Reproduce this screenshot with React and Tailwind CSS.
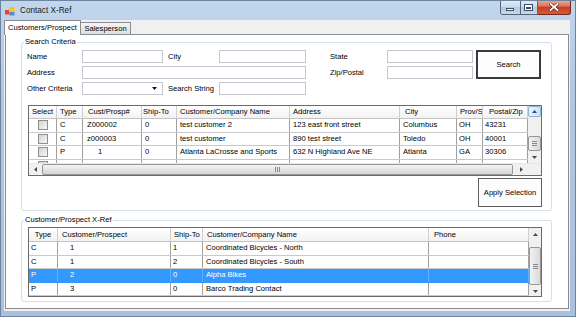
import React from 'react';

function Tri({ dir, color = '#4a4a4a' }) {
  if (dir === 'up')
    return (
      <svg width="5" height="3" viewBox="0 0 5 3"><polygon points="0,3 2.5,0 5,3" fill={color} /></svg>
    );
  if (dir === 'down')
    return (
      <svg width="5" height="3" viewBox="0 0 5 3"><polygon points="0,0 2.5,3 5,0" fill={color} /></svg>
    );
  if (dir === 'left')
    return (
      <svg width="3" height="5" viewBox="0 0 3 5"><polygon points="3,0 0,2.5 3,5" fill={color} /></svg>
    );
  return (
    <svg width="3" height="5" viewBox="0 0 3 5"><polygon points="0,0 3,2.5 0,5" fill={color} /></svg>
  );
}

function VGrip() {
  return (
    <div className="flex flex-col gap-[1px]">
      <div className="w-[5px] h-px bg-[#8a8a8a]" />
      <div className="w-[5px] h-px bg-[#8a8a8a]" />
      <div className="w-[5px] h-px bg-[#8a8a8a]" />
    </div>
  );
}

function HGrip() {
  return (
    <div className="flex gap-[1px]">
      <div className="w-px h-[5px] bg-[#8a8a8a]" />
      <div className="w-px h-[5px] bg-[#8a8a8a]" />
      <div className="w-px h-[5px] bg-[#8a8a8a]" />
    </div>
  );
}

function Checkbox() {
  return (
    <div className="w-[10px] h-[10px] border border-[#8e8f8f] bg-linear-to-br from-[#d2d2d2] to-[#f8f8f8]" />
  );
}

const UC = [
  { w: 'w-[28px]', hp: 'justify-center', dp: 'justify-center' },
  { w: 'w-[26px]', hp: 'pl-[3px]', dp: 'pl-[3px]' },
  { w: 'w-[59px]', hp: 'pl-[5px]', dp: 'pl-[4px]' },
  { w: 'w-[35px]', hp: 'pl-[1px]', dp: 'pl-[3px]' },
  { w: 'w-[113px]', hp: 'pl-[3px]', dp: 'pl-[3px]' },
  { w: 'w-[110px]', hp: 'pl-[3px]', dp: 'pl-[3px]' },
  { w: 'w-[57px]', hp: 'pl-[5px]', dp: 'pl-[3px]' },
  { w: 'w-[26px]', hp: 'pl-[3px]', dp: 'pl-[2px]' },
  { w: 'w-[45px]', hp: 'pl-[6px]', dp: 'pl-[2px]' },
];
const UH = ['Select', 'Type', 'Cust/Prosp#', 'Ship-To', 'Customer/Company Name', 'Address', 'City', 'Prov/S', 'Postal/Zip'];
const UR = [
  ['', 'C', 'Z000002', '0', 'test customer 2', '123 east front street', 'Columbus', 'OH', '43231'],
  ['', 'C', 'z000003', '0', 'test customer', '890 test street', 'Toledo', 'OH', '40001'],
  ['', 'P', { t: '1', cls: 'pl-[15px]' }, '0', 'Atlanta LaCrosse and Sports', '632 N Highland Ave NE', 'Atlanta', 'GA', '30306'],
  ['', '', '', '', '', '', '', '', ''],
];

const LC = [
  { w: 'w-[29px]', hp: 'justify-center', dp: 'pl-[2px]' },
  { w: 'w-[113px]', hp: 'pl-[4px]', dp: 'pl-[12px]' },
  { w: 'w-[32px]', hp: 'pl-[3px]', dp: 'pl-[2px]' },
  { w: 'w-[226px]', hp: 'pl-[4px]', dp: 'pl-[3px]' },
  { w: 'w-[100px]', hp: 'pl-[5px]', dp: 'pl-[3px]' },
];
const LH = ['Type', 'Customer/Prospect', 'Ship-To', 'Customer/Company Name', 'Phone'];
const LR = [
  ['C', '1', '1', 'Coordinated Bicycles - North', ''],
  ['C', '1', '2', 'Coordinated Bicycles - South', ''],
  ['P', '2', '0', 'Alpha Bikes', ''],
  ['P', '3', '0', 'Barco Trading Contact', ''],
];

function HeaderRow({ cols, labels, h }) {
  return (
    <div className={`flex shrink-0 ${h} border-b border-[#c4c4c4] bg-linear-to-b from-white to-[#f2f2f2]`}>
      {cols.map((c, i) => (
        <div key={i} className={`${c.w} ${c.hp} shrink-0 flex items-center overflow-hidden whitespace-nowrap border-r border-[#d0d0d0]`}>
          {labels[i]}
        </div>
      ))}
    </div>
  );
}

function Input({ className = '' }) {
  return <div className={`h-[13px] border border-[#c4c7cd] bg-white ${className}`} />;
}

function Label({ children, className = '' }) {
  return <div className={`whitespace-nowrap ${className}`}>{children}</div>;
}

export default function App() {
  return (
    <div className="w-[576px] h-[317px] overflow-hidden flex flex-col border border-[#6d84a0] bg-[linear-gradient(180deg,#c2d6ec_0%,#b1c8e2_30%,#a9c1dd_100%)] font-['Liberation_Sans',Arial,sans-serif] text-[7.6px] leading-none text-black">
      {/* Title bar */}
      <div className="h-[19px] shrink-0 flex items-start">
        <div className="flex items-center h-full pl-[4px] gap-[5px] pt-[1px]">
          <svg width="10" height="10" viewBox="0 0 10 10">
            <rect x="0" y="4" width="4.5" height="4.5" fill="#e2462d" />
            <rect x="4" y="1" width="5.5" height="5" fill="#f5c42c" />
            <rect x="4.5" y="6" width="5" height="3.5" fill="#5a8ad0" />
          </svg>
          <span className="text-[8.2px] text-[#1a1a1a]">Contact X-Ref</span>
        </div>
        <div className="ml-auto mr-[4px] -mt-px flex h-[15px]">
          <div className="w-[38px] flex border border-t-0 border-[#52687f] rounded-bl-[3px] overflow-hidden">
            <div className="w-[21px] flex items-end justify-center pb-[3px] border-r border-[#52687f] bg-[linear-gradient(180deg,#e3ecf6_0%,#cbdaeb_50%,#b5c9df_51%,#c8d8ea_100%)]">
              <div className="w-[8px] h-[3px] bg-white border border-[#3b4d64]" />
            </div>
            <div className="w-[17px] flex items-center justify-center bg-[linear-gradient(180deg,#e3ecf6_0%,#cbdaeb_50%,#b5c9df_51%,#c8d8ea_100%)]">
              <div className="w-[9px] h-[7px] border border-[#3b4d64] bg-white p-[1px] pt-[2px]">
                <div className="w-full h-full bg-[#b9cbe0] border border-[#3b4d64]" />
              </div>
            </div>
          </div>
          <div className="w-[33px] flex items-center justify-center border border-t-0 border-l-0 border-[#6e2b1f] rounded-br-[3px] bg-[linear-gradient(180deg,#eab09f_0%,#d9735a_45%,#c63c20_50%,#d65a3d_100%)]">
            <svg width="10" height="8" viewBox="0 0 10 8">
              <path d="M1.5 1 L8.5 7 M8.5 1 L1.5 7" stroke="#5a1a10" strokeWidth="3" strokeLinecap="square" />
              <path d="M1.5 1 L8.5 7 M8.5 1 L1.5 7" stroke="#ffffff" strokeWidth="1.8" strokeLinecap="square" />
            </svg>
          </div>
        </div>
      </div>

      {/* Body */}
      <div className="flex-1 flex pl-[3px] pr-[5px] pb-[5px] min-h-0">
        <div className="flex-1 flex flex-col bg-[#f0f0f0] min-h-0">
          {/* Tabs */}
          <div className="h-[14px] shrink-0 flex items-end">
            <div className="relative z-10 w-[77px] h-[15px] -mb-px flex items-center justify-center bg-white border border-b-0 border-[#898c95] pb-[1px]">
              Customers/Prospect
            </div>
            <div className="w-[50px] h-[12px] flex items-center justify-center border border-l-0 border-b-0 border-[#898c95] bg-linear-to-b from-[#f5f5f5] to-[#dedede]">
              Salesperson
            </div>
          </div>

          {/* Tab page */}
          <div className="flex-1 mx-[1px] mb-[2px] border border-[#898c95] bg-white min-h-0">
            {/* Search Criteria */}
            <fieldset className="ml-[15px] mt-[1px] w-[531px] border border-[#d5dfe5] rounded-[3px] pb-[3px]">
              <legend className="ml-[2px] px-[1px] leading-[12px]">Search Criteria</legend>
              <div className="mt-[2px] pl-[5px] grid grid-cols-[55px_81px_56px_87px_81px_86px_3px_65px] grid-rows-[13px_13px_13px] gap-y-[3px] items-center">
                <Label className="col-start-1 row-start-1">Name</Label>
                <Input className="col-start-2 row-start-1" />
                <Label className="col-start-3 row-start-1 pl-[5px]">City</Label>
                <Input className="col-start-4 row-start-1" />
                <Label className="col-start-5 row-start-1 pl-[24px]">State</Label>
                <Input className="col-start-6 row-start-1" />
                <button className="col-start-8 row-start-1 row-span-2 h-[29px] self-start border-2 border-[#3a3a3a] bg-[#fdfdfd] text-[7.6px] leading-none">
                  Search
                </button>

                <Label className="col-start-1 row-start-2">Address</Label>
                <Input className="col-start-2 col-span-3 row-start-2" />
                <Label className="col-start-5 row-start-2 pl-[24px]">Zip/Postal</Label>
                <Input className="col-start-6 row-start-2" />

                <Label className="col-start-1 row-start-3">Other Criteria</Label>
                <div className="col-start-2 row-start-3 h-[13px] border border-[#c4c7cd] bg-white flex items-center justify-end pr-[5px]">
                  <Tri dir="down" color="#111111" />
                </div>
                <Label className="col-start-3 row-start-3 pl-[5px]">Search String</Label>
                <Input className="col-start-4 row-start-3" />
              </div>

              {/* Upper grid */}
              <div className="ml-[6px] mt-[10px] w-[514px] h-[71px] border border-[#6b6b6b] flex flex-col bg-white">
                <div className="flex h-[57px]">
                  <div className="w-[499px] flex flex-col overflow-hidden">
                    <HeaderRow cols={UC} labels={UH} h="h-[13px]" />
                    <div className="h-[44px] overflow-hidden">
                      {UR.map((r, ri) => (
                        <div key={ri} className="flex h-[13.5px] border-b border-[#c9c9c9]">
                          {UC.map((c, ci) => {
                            const v = r[ci];
                            const txt = typeof v === 'object' ? v.t : v;
                            const pad = typeof v === 'object' ? v.cls : c.dp;
                            return (
                              <div key={ci} className={`${c.w} ${pad} shrink-0 flex items-center overflow-hidden whitespace-nowrap border-r border-[#a0a0a0]`}>
                                {ci === 0 ? <Checkbox /> : txt}
                              </div>
                            );
                          })}
                        </div>
                      ))}
                    </div>
                  </div>
                  <div className="w-[13px] flex flex-col bg-[#f0f0f0]">
                    <div className="h-[11px] flex items-center justify-center border border-[#8fb1d6] rounded-[2px] bg-linear-to-r from-[#eaf3fc] to-[#cfe2f6]">
                      <Tri dir="up" color="#2f4f7a" />
                    </div>
                    <div className="flex-1" />
                    <div className="h-[15px] flex items-center justify-center border border-[#979797] rounded-[2px] bg-linear-to-r from-[#f3f3f3] to-[#d9d9d9]">
                      <VGrip />
                    </div>
                    <div className="h-[12px] flex items-center justify-center">
                      <Tri dir="down" />
                    </div>
                  </div>
                </div>
                <div className="flex h-[12px] border-t border-[#e6e6e6]">
                  <div className="w-[499px] flex bg-[#f0f0f0]">
                    <div className="w-[12px] flex items-center justify-center">
                      <Tri dir="left" />
                    </div>
                    <div className="flex-1 mx-[1px] flex items-center justify-center border border-[#979797] rounded-[2px] bg-linear-to-b from-[#f3f3f3] to-[#d6d6d6]">
                      <HGrip />
                    </div>
                    <div className="w-[14px] flex items-center justify-center">
                      <Tri dir="right" />
                    </div>
                  </div>
                  <div className="w-[13px] bg-[#f0f0f0]" />
                </div>
              </div>

              <div className="flex justify-end pr-[9px] mt-[2px]">
                <button className="w-[64px] h-[29px] border border-[#5e5e5e] bg-[#fdfdfd] text-[7.6px] leading-none">
                  Apply Selection
                </button>
              </div>
            </fieldset>

            {/* Customer/Prospect X-Ref */}
            <fieldset className="ml-[15px] mt-[3px] w-[531px] border border-[#d5dfe5] rounded-[3px] pb-[4px]">
              <legend className="ml-[2px] px-[1px] leading-[12px]">Customer/Prospect X-Ref</legend>
              <div className="ml-[6px] mt-[1px] w-[514px] h-[70px] border border-[#6b6b6b] flex bg-white">
                <div className="w-[500px] flex flex-col overflow-hidden">
                  <HeaderRow cols={LC} labels={LH} h="h-[14px]" />
                  {LR.map((r, ri) => {
                    const sel = ri === 2;
                    return (
                      <div key={ri} className={`flex h-[13.5px] border-b ${sel ? 'bg-[#3399ff] text-white border-[#3399ff]' : 'border-[#c9c9c9]'}`}>
                        {LC.map((c, ci) => (
                          <div key={ci} className={`${c.w} ${c.dp} shrink-0 flex items-center overflow-hidden whitespace-nowrap border-r ${sel ? 'border-[#62b0ff]' : 'border-[#a0a0a0]'}`}>
                            {r[ci]}
                          </div>
                        ))}
                      </div>
                    );
                  })}
                </div>
                <div className="w-[12px] flex flex-col bg-[#f0f0f0]">
                  <div className="h-[12px] flex items-center justify-center">
                    <Tri dir="up" />
                  </div>
                  <div className="h-[7px]" />
                  <div className="h-[38px] flex items-center justify-center border border-[#979797] rounded-[2px] bg-linear-to-r from-[#f3f3f3] to-[#d9d9d9]">
                    <VGrip />
                  </div>
                  <div className="flex-1" />
                  <div className="h-[10px] flex items-center justify-center">
                    <Tri dir="down" />
                  </div>
                </div>
              </div>
            </fieldset>
          </div>
        </div>
      </div>
    </div>
  );
}
